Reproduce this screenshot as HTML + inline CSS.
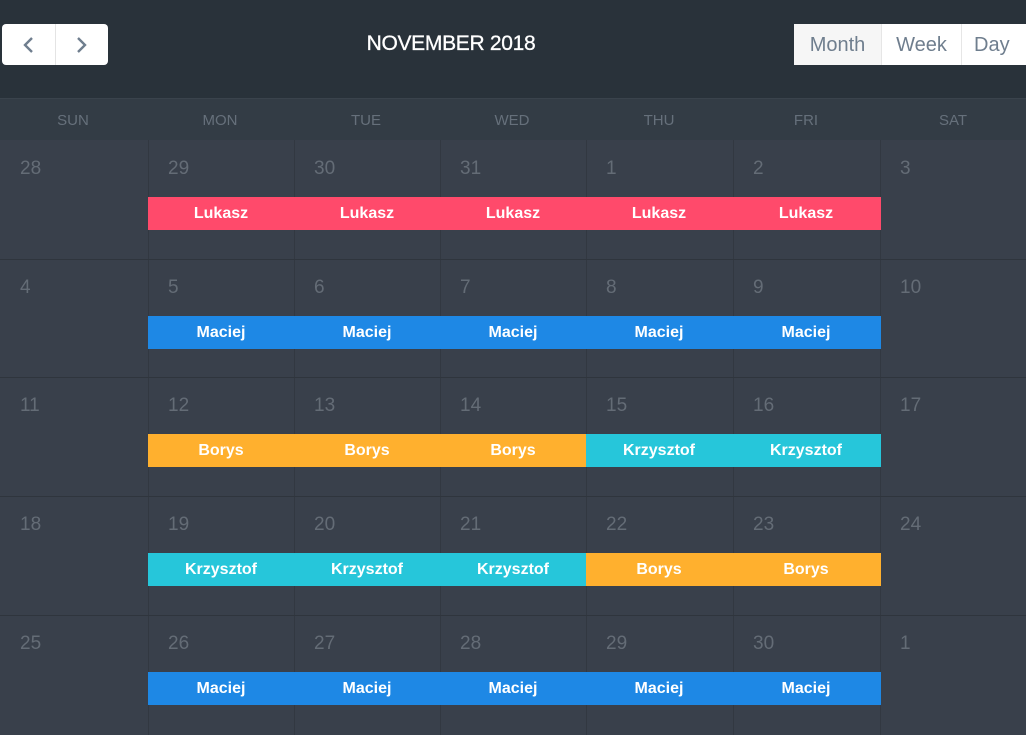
<!DOCTYPE html><html><head><style>
*{margin:0;padding:0;box-sizing:border-box}
body{width:1026px;height:735px;overflow:hidden;background:#283139;font-family:"Liberation Sans",sans-serif;position:relative}
.hdr{position:absolute;left:0;top:0;width:1026px;height:98px;background:#29323a}
.nav{position:absolute;left:2px;top:24px;width:106px;height:41px;background:#fff;border-radius:4px;display:flex}
.nav div{flex:1;display:flex;align-items:center;justify-content:center}
.nav div:first-child{border-right:1px solid #e4e4e4}
.title{position:absolute;left:0;width:902px;top:32px;text-align:center;color:#fff;font-size:21px;letter-spacing:-0.3px;-webkit-text-stroke:0.3px #fff}
.views{position:absolute;left:794px;top:24px;width:236px;height:41px;background:#fff;border-radius:4px;display:flex;color:#6f7e8e;font-size:20px}
.views div{display:flex;align-items:center;justify-content:center;border-right:1px solid #e6e6e6;padding-top:2px}
.wk{position:absolute;top:98px;left:0;width:1026px;height:42px;background:#333c45;border-top:1px solid #3a434c}
.wk div{position:absolute;top:13px;width:146px;text-align:center;color:#66707b;font-size:15px}
.grid{position:absolute;top:140px;left:0;width:1026px;height:595px;background:#39404b}
.vl{position:absolute;top:0;width:1px;height:595px;background:#323841}
.hl{position:absolute;left:0;width:1026px;height:1px;background:#2f353d}
.d{position:absolute;color:#646c76;font-size:19px}
.ev{position:absolute;height:33px;color:#fff;font-size:16px;font-weight:bold}
.ev span{position:absolute;top:8px;width:146px;text-align:center}
</style></head><body>
<div class="hdr"></div>
<div class="nav"><div><svg width="14" height="18"><path d="M11 2L4 9l7 7" stroke="#6f7e8e" stroke-width="2.4" fill="none"/></svg></div><div><svg width="14" height="18"><path d="M3 2l7 7-7 7" stroke="#6f7e8e" stroke-width="2.4" fill="none"/></svg></div></div>
<div class="title">NOVEMBER 2018</div>
<div class="views"><div style="width:88px;background:#f6f6f6">Month</div><div style="width:80px">Week</div><div style="width:64px;border:0;justify-content:flex-start;padding-left:12px">Day</div></div>
<div class="wk">
<div style="left:0">SUN</div><div style="left:147px">MON</div><div style="left:293px">TUE</div><div style="left:439px">WED</div><div style="left:586px">THU</div><div style="left:733px">FRI</div><div style="left:880px">SAT</div>
</div>
<div class="grid">
<div class="vl" style="left:148px"></div><div class="vl" style="left:294px"></div><div class="vl" style="left:440px"></div><div class="vl" style="left:586px"></div><div class="vl" style="left:733px"></div><div class="vl" style="left:880px"></div>
<div class="hl" style="top:119px"></div><div class="hl" style="top:237px"></div><div class="hl" style="top:356px"></div><div class="hl" style="top:475px"></div>
</div>
<div id="c"></div>
<script>
var xs=[0,148,294,440,586,733,880];
var days=[[28,29,30,31,1,2,3],[4,5,6,7,8,9,10],[11,12,13,14,15,16,17],[18,19,20,21,22,23,24],[25,26,27,28,29,30,1]];
var tops=[140,259,377,496,615];
var R='#ff4a6b',B='#1e88e5',O='#ffb02e',C='#26c6da';
var ev=[[[R,'Lukasz'],[R,'Lukasz'],[R,'Lukasz'],[R,'Lukasz'],[R,'Lukasz']],
[[B,'Maciej'],[B,'Maciej'],[B,'Maciej'],[B,'Maciej'],[B,'Maciej']],
[[O,'Borys'],[O,'Borys'],[O,'Borys'],[C,'Krzysztof'],[C,'Krzysztof']],
[[C,'Krzysztof'],[C,'Krzysztof'],[C,'Krzysztof'],[O,'Borys'],[O,'Borys']],
[[B,'Maciej'],[B,'Maciej'],[B,'Maciej'],[B,'Maciej'],[B,'Maciej']]];
var h='';
for(var r=0;r<5;r++){for(var c=0;c<7;c++){h+='<div class="d" style="left:'+(xs[c]+20)+'px;top:'+(tops[r]+18)+'px">'+days[r][c]+'</div>';}
for(var k=0;k<5;k++){var x=xs[k+1],w=(k==4?881:xs[k+2])-x;h+='<div class="ev" style="left:'+x+'px;width:'+w+'px;top:'+(tops[r]+57)+'px;background:'+ev[r][k][0]+'"><span style="left:0">'+ev[r][k][1]+'</span></div>';}}
document.getElementById('c').innerHTML=h;
</script>
</body></html>
